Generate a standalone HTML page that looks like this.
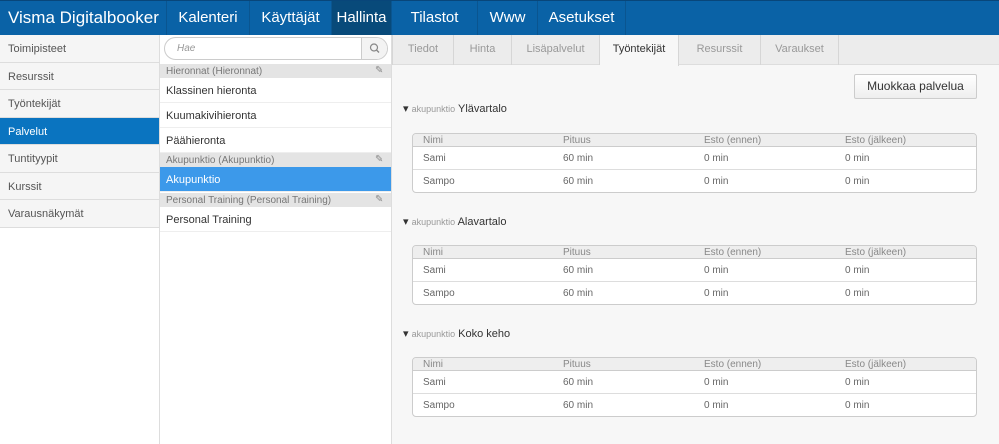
<!DOCTYPE html>
<html><head><meta charset="utf-8"><style>
*{box-sizing:border-box;margin:0;padding:0;white-space:nowrap}
body{width:999px;height:444px;overflow:hidden;font-family:"Liberation Sans","DejaVu Sans",sans-serif;background:#fff;position:relative;color:#444}
.hdr{position:absolute;left:0;top:0;width:999px;height:35px;background:#0a62a6;border-top:1px solid #08467a}
.hdr div{position:absolute;top:0;height:34px;line-height:34px;color:#fff;font-size:15px;text-align:center;border-right:1px solid #0a5590}
.hdr .logo{font-size:17px;text-align:left;padding-left:8px}
.left{position:absolute;left:0;top:35px;width:160px;height:409px;background:#fff;border-right:1px solid #ddd}
.left div{height:27.5px;line-height:29px;font-size:11px;padding-left:8px;background:#f5f5f5;border-bottom:1px solid #ddd;color:#555}
.left div.act{background:#0a74c0;color:#fff}
.mid{position:absolute;left:160px;top:35px;width:232px;height:409px;background:#fff;border-right:1px solid #ddd}
.search{position:absolute;left:4px;top:2px;width:224px;height:23px;border:1px solid #ccc;border-radius:12px;background:#fff}
.search span{position:absolute;left:12px;top:5px;font-size:10px;font-style:italic;color:#999}
.search i{position:absolute;right:0;top:0;width:26px;height:21px;border-left:1px solid #ccc;background:#f3f3f3;border-radius:0 11px 11px 0}
.grp{position:absolute;left:0;width:231px;height:14px;background:#e4e4e4;font-size:10px;color:#777;padding-left:6px;line-height:15px}
.grp b{position:absolute;right:6px;top:2px;width:10px;height:10px;color:#888;font-size:10px;line-height:10px}
.it{position:absolute;left:0;width:231px;height:25px;line-height:26px;font-size:11px;padding-left:6px;border-bottom:1px solid #eee;color:#333}
.it.sel{background:#3c99ea;color:#fff}
.right{position:absolute;left:392px;top:35px;width:607px;height:409px;background:#f7f7f7}
.tabs{position:absolute;left:0;top:0;width:607px;height:30px;background:#ececec;border-bottom:1px solid #ddd}
.tab{position:absolute;top:0;height:30px;line-height:29px;font-size:11px;color:#999;text-align:center;border-right:1px solid #d6d6d6}
.tab.act{background:#f7f7f7;color:#333;height:31px}
.btn{position:absolute;left:462px;top:39px;width:123px;height:25px;border:1px solid #ccc;border-radius:2px;background:linear-gradient(#fff,#eee);font-size:12px;color:#333;text-align:center;line-height:23px}
.sec{position:absolute;left:11px;font-size:11px;color:#333}
.sec small{font-size:9px;color:#999}
.tbl{position:absolute;left:20px;width:565px;height:60px;border:1px solid #ccc;border-radius:4px;background:#fff;overflow:hidden;font-size:10px}
.tbl .h{height:13px;background:#eee;border-bottom:1px solid #ccc;color:#888;position:relative}
.tbl .r{height:23px;border-bottom:1px solid #ddd;position:relative;color:#666}
.tbl .r:last-child{border-bottom:none}
.tbl span{position:absolute;top:0}
.tbl .h span{line-height:13px}
.tbl .r span{line-height:23px}
</style></head><body>
<div class="hdr">
<div class="logo" style="left:0;width:167px">Visma Digitalbooker</div>
<div style="left:167px;width:83px">Kalenteri</div>
<div style="left:250px;width:82px">Käyttäjät</div>
<div style="left:332px;width:60px;background:#084a7a">Hallinta</div>
<div style="left:392px;width:86px">Tilastot</div>
<div style="left:478px;width:60px">Www</div>
<div style="left:538px;width:88px">Asetukset</div>
</div>
<div class="left">
<div>Toimipisteet</div><div>Resurssit</div><div>Työntekijät</div><div class="act">Palvelut</div><div>Tuntityypit</div><div>Kurssit</div><div>Varausnäkymät</div>
</div>
<div class="mid">
<div class="search"><span>Hae</span><i><svg width="26" height="21"><circle cx="12" cy="9.5" r="3.5" fill="none" stroke="#888" stroke-width="1.2"/><line x1="14.5" y1="12" x2="17" y2="14.5" stroke="#888" stroke-width="1.4"/></svg></i></div>
<div class="grp" style="top:29px">Hieronnat (Hieronnat)<b>✎</b></div>
<div class="it" style="top:43px">Klassinen hieronta</div>
<div class="it" style="top:68px">Kuumakivihieronta</div>
<div class="it" style="top:93px">Päähieronta</div>
<div class="grp" style="top:118px">Akupunktio (Akupunktio)<b>✎</b></div>
<div class="it sel" style="top:132px;height:25px">Akupunktio</div>
<div class="grp" style="top:158px">Personal Training (Personal Training)<b>✎</b></div>
<div class="it" style="top:172px">Personal Training</div>
</div>
<div class="right">
<div class="tabs">
<div class="tab" style="left:0;width:62px;border-left:1px solid #d6d6d6">Tiedot</div>
<div class="tab" style="left:62px;width:58px">Hinta</div>
<div class="tab" style="left:120px;width:88px">Lisäpalvelut</div>
<div class="tab act" style="left:208px;width:79px">Työntekijät</div>
<div class="tab" style="left:287px;width:82px">Resurssit</div>
<div class="tab" style="left:369px;width:78px">Varaukset</div>
</div>
<div class="btn">Muokkaa palvelua</div>

<div class="sec" style="top:67px">▾ <small>akupunktio</small> Ylävartalo</div>
<div class="tbl" style="top:98px">
<div class="h"><span style="left:10px">Nimi</span><span style="left:150px">Pituus</span><span style="left:291px">Esto (ennen)</span><span style="left:432px">Esto (jälkeen)</span></div>
<div class="r"><span style="left:10px">Sami</span><span style="left:150px">60 min</span><span style="left:291px">0 min</span><span style="left:432px">0 min</span></div>
<div class="r"><span style="left:10px">Sampo</span><span style="left:150px">60 min</span><span style="left:291px">0 min</span><span style="left:432px">0 min</span></div>
</div>

<div class="sec" style="top:180px">▾ <small>akupunktio</small> Alavartalo</div>
<div class="tbl" style="top:210px">
<div class="h"><span style="left:10px">Nimi</span><span style="left:150px">Pituus</span><span style="left:291px">Esto (ennen)</span><span style="left:432px">Esto (jälkeen)</span></div>
<div class="r"><span style="left:10px">Sami</span><span style="left:150px">60 min</span><span style="left:291px">0 min</span><span style="left:432px">0 min</span></div>
<div class="r"><span style="left:10px">Sampo</span><span style="left:150px">60 min</span><span style="left:291px">0 min</span><span style="left:432px">0 min</span></div>
</div>

<div class="sec" style="top:292px">▾ <small>akupunktio</small> Koko keho</div>
<div class="tbl" style="top:322px">
<div class="h"><span style="left:10px">Nimi</span><span style="left:150px">Pituus</span><span style="left:291px">Esto (ennen)</span><span style="left:432px">Esto (jälkeen)</span></div>
<div class="r"><span style="left:10px">Sami</span><span style="left:150px">60 min</span><span style="left:291px">0 min</span><span style="left:432px">0 min</span></div>
<div class="r"><span style="left:10px">Sampo</span><span style="left:150px">60 min</span><span style="left:291px">0 min</span><span style="left:432px">0 min</span></div>
</div>
</div>
</body></html>
